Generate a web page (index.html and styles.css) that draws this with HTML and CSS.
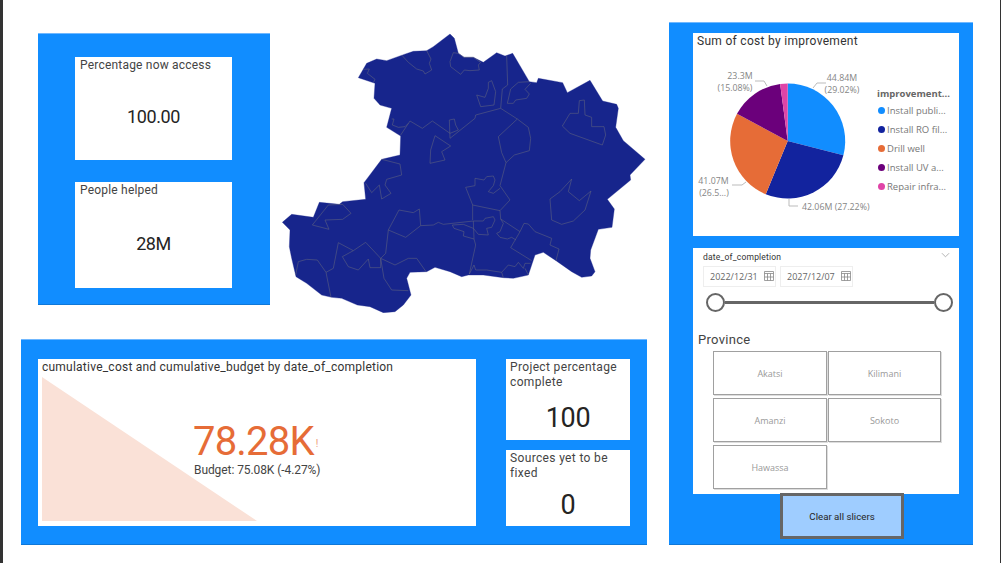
FILE: index.html
```html
<!DOCTYPE html>
<html lang="en">
<head>
<meta charset="utf-8">
<title>Water projects dashboard</title>
<link rel="stylesheet" href="styles.css">
</head>
<body>
<div class="report">
  <div class="left-col">
    <div class="top-row">
      <section class="panel panel-a">
        <div class="card card-a1"><h3 class="card-title">Percentage now access</h3><div class="card-value value-md">100.00</div></div>
        <div class="card card-a2"><h3 class="card-title">People helped</h3><div class="card-value value-md">28M</div></div>
      </section>
      <svg class="map" viewBox="33 39 1095 840" aria-label="Map of provinces">
        <path class="land" d="M540 42L553 55L565 100L582 112L610 112L640 127L680 98L705 108L728 100L778 185L800 188L805 175L878 188L892 218L960 181L998 243L1040 253L1045 265L1037 322L1060 362L1125 418L1080 465L1082 480L1012 538L1033 567L1026 622L985 628L962 690L960 715L975 755L965 768L935 772L905 755L858 722L820 697L795 705L780 750L775 765L730 775L700 773L640 765L595 765L575 770L540 755L495 742L470 755L420 757L410 775L423 825L400 855L375 875L340 878L300 860L262 855L215 835L185 832L155 825L110 790L78 770L65 715L58 680L60 630L37 607L65 583L130 592L148 547L208 553L218 545L287 538L282 488L335 418L390 405L392 348L350 322L365 265L330 255L312 235L315 190L265 173L290 130L320 117L350 122L400 104L430 94L470 92L490 80Z"/>
        <path class="borders" d="M395 105L415 127L440 147L460 153L465 162L485 150L478 130L483 117L470 92M280 148L298 147L292 160L315 178L310 188M550 98L565 100L582 112L610 112L632 127L625 135L628 150L600 152L583 150L572 163L542 140L540 125ZM655 187L665 182L677 215L672 255L632 260L620 225L645 232L655 205ZM710 108L713 195L697 207L692 265L617 285L615 295L540 355L538 300L553 297L557 315L565 330L540 340L487 303L457 325L420 303L392 345M365 297L372 297L367 315L385 322L405 320L415 310M778 185L745 187L722 207L712 250L730 250L737 240L770 235L778 222L765 208L782 190M692 265L742 297L775 322L782 355L778 392L733 405L708 428L695 398L685 350L742 297M708 428L690 497L720 540L690 572L608 555L587 502L615 497L615 475L642 480L650 470L670 468L675 480L670 497L655 515L670 520L690 505M608 555L608 600M690 572L692 597L750 635L722 683L785 722M452 617L490 615L505 607L520 613L610 603L640 603L645 595L670 590L675 600L665 622L650 625L655 645L625 643L610 625L580 613L547 615L552 625L582 635L580 648L612 657M610 603L612 657L617 675L598 762M692 597L700 610L690 635L680 640L690 652L712 657L725 652L738 660M750 635L762 610L775 612L795 635L845 655L840 675L867 687L858 722M335 418L390 432L395 465L350 478L345 495L363 520L335 537L328 495L305 518L287 490M495 347L542 378L515 395L525 420L480 430L482 390ZM905 477L895 515L928 542L963 513L945 570L910 603L875 613L845 600L840 537L870 515ZM928 242L943 240L945 285L965 292L965 320L1002 320L1007 345L997 375L900 340L877 318L900 280L925 280ZM175 555L218 553L243 580L218 598L165 600L177 628L127 615ZM387 570L430 578L448 567L452 617L407 652L355 630ZM355 630L347 700L332 715M205 668L250 692L287 667L332 715L332 743L300 743L295 717L265 750L235 740L217 710L250 692M205 668L190 745L168 757L142 720L110 718L85 725L77 765M168 757L183 832M332 715L375 735L415 715L440 715L468 755M332 715L342 775L365 810L415 812M598 762L612 735L617 750L650 750L695 757L715 735L735 740L745 727L760 745L765 730L782 730M700 773L695 757M765 745L775 765"/>
      </svg>
    </div>
    <section class="panel panel-b">
      <div class="card kpi">
        <h3 class="card-title kpi-title">cumulative_cost and cumulative_budget by date_of_completion</h3>
        <svg class="kpi-area" viewBox="0 0 215 144" preserveAspectRatio="none" aria-hidden="true"><polygon points="0,0 215,144 0,144"/></svg>
        <div class="kpi-text">
          <div class="kpi-value">78.28K<span class="kpi-flag">!</span></div>
          <div class="kpi-budget">Budget: 75.08K (-4.27%)</div>
        </div>
      </div>
      <div class="side-cards">
        <div class="card card-b1"><h3 class="card-title wrap">Project percentage complete</h3><div class="card-value value-lg">100</div></div>
        <div class="card card-b2"><h3 class="card-title wrap">Sources yet to be fixed</h3><div class="card-value value-lg">0</div></div>
      </div>
    </section>
  </div>
  <section class="panel panel-c">
    <div class="card pie-card">
      <h3 class="card-title pie-title">Sum of cost by improvement</h3>
      <div class="pie-body">
        <svg class="pie" viewBox="693 53 184 180" aria-label="Pie chart">
          <g transform="translate(787.7 141)">
            <path fill="#118DFF" d="M0 0V-57.5A57.5 57.5 0 0 1 55.68 14.36Z"/>
            <path fill="#12239E" d="M0 0L55.68 14.36A57.5 57.5 0 0 1 -21.96 53.14Z"/>
            <path fill="#E66C37" d="M0 0L-21.96 53.14A57.5 57.5 0 0 1 -50.7 -27.13Z"/>
            <path fill="#6B007B" d="M0 0L-50.7 -27.13A57.5 57.5 0 0 1 -7.57 -57Z"/>
            <path fill="#E044A7" d="M0 0L-7.57 -57A57.5 57.5 0 0 1 0 -57.5Z"/>
          </g>
          <path class="leader" d="M813 88L817 83H826M755 81H764L767 86M732 185H742L746 182M789 199V206H798"/>
          <text class="pie-label" x="842" y="81" text-anchor="middle">44.84M</text>
          <text class="pie-label" x="842" y="93" text-anchor="middle">(29.02%)</text>
          <text class="pie-label" x="740" y="79" text-anchor="middle">23.3M</text>
          <text class="pie-label" x="735" y="91" text-anchor="middle">(15.08%)</text>
          <text class="pie-label" x="713.500" y="184" text-anchor="middle">41.07M</text>
          <text class="pie-label" x="714" y="196" text-anchor="middle">(26.5...)</text>
          <text class="pie-label" x="802" y="210">42.06M (27.22%)</text>
        </svg>
        <div class="legend">
          <div class="legend-title">improvement...</div>
          <div class="legend-item"><i class="dot dot-1"></i>Install publi...</div>
          <div class="legend-item"><i class="dot dot-2"></i>Install RO fil...</div>
          <div class="legend-item"><i class="dot dot-3"></i>Drill well</div>
          <div class="legend-item"><i class="dot dot-4"></i>Install UV a...</div>
          <div class="legend-item"><i class="dot dot-5"></i>Repair infra...</div>
        </div>
      </div>
    </div>
    <div class="card slicer-card">
      <div class="slicer-head">
        <span class="slicer-name">date_of_completion</span>
        <svg class="chevron" viewBox="0 0 10 6" aria-hidden="true"><path d="M1 1L5 5L9 1"/></svg>
      </div>
      <div class="dates">
        <div class="date-box">2022/12/31<svg class="cal" viewBox="0 0 10 10" aria-hidden="true"><path d="M.5 .5H9.500V9.500H.5ZM.5 2.500H9.500M3.500 2.500V9.500M6.500 2.500V9.500M.5 6H9.500"/></svg></div>
        <div class="date-box">2027/12/07<svg class="cal" viewBox="0 0 10 10" aria-hidden="true"><path d="M.5 .5H9.500V9.500H.5ZM.5 2.500H9.500M3.500 2.500V9.500M6.500 2.500V9.500M.5 6H9.500"/></svg></div>
      </div>
      <div class="slider"><span class="knob"></span><span class="track"></span><span class="knob"></span></div>
      <h3 class="province">Province</h3>
      <div class="province-grid">
        <div class="province-btn">Akatsi</div>
        <div class="province-btn">Kilimani</div>
        <div class="province-btn">Amanzi</div>
        <div class="province-btn">Sokoto</div>
        <div class="province-btn">Hawassa</div>
      </div>
    </div>
    <button class="clear-btn" type="button">Clear all slicers</button>
  </section>
</div>
</body>
</html>
```
FILE: styles.css
```css
* { box-sizing: border-box; }
html, body { margin: 0; padding: 0; background: #fff; }
body { width: 1001px; height: 563px; overflow: hidden; font-family: Roboto, "Liberation Sans", sans-serif; }
h3 { margin: 0; font-weight: 400; }

.report { display: flex; width: 1001px; height: 563px; border-left: 3px solid #333; border-right: 1px solid #333; background: #fff; }
.left-col { width: 666px; flex: none; padding-top: 33px; }
.top-row { display: flex; align-items: flex-start; height: 280px; padding-left: 35px; }

.panel { background: #118DFF; border-top: 1px solid #70b8ff; border-bottom: 1px solid #0f78d8; }
.panel-a { width: 232px; height: 272px; padding: 23px 38px 0 37px; display: flex; flex-direction: column; gap: 22px; }
.map { width: 365px; height: 280px; margin-left: 11px; flex: none; }
.land { fill: #17258C; stroke: #17258C; stroke-width: 1; }
.borders { fill: none; stroke: #5f6480; stroke-width: 1.700; stroke-linejoin: round; }

.panel-b { width: 626px; height: 206px; margin: 26px 0 0 18px; padding: 19px 16px 0 17px; display: flex; gap: 30px; }

.card { background: #fff; display: flex; flex-direction: column; }
.card-a1 { height: 103px; }
.card-a2 { height: 106px; }
.card-title { font-size: 12px; line-height: 15px; letter-spacing: .2px; color: #444; padding: 1px 5px 0; white-space: nowrap; }
.card-title.wrap { white-space: normal; padding: 1px 4px 0; letter-spacing: .35px; }
.card-value { flex: 1; display: flex; align-items: center; justify-content: center; color: #252423; }
.value-md { font-size: 18px; letter-spacing: -.4px; }
.value-lg { font-size: 27px; letter-spacing: -.3px; }
.card-b1 .card-value { padding-top: 5px; }
.card-b2 .card-value { padding-top: 2px; }

.kpi { width: 438px; height: 167px; position: relative; padding: 0 0 5px 4px; }
.kpi-title { padding: 1px 0 0 0; height: 18px; color: #333; letter-spacing: .23px; }
.kpi-area { flex: none; width: 215px; height: 144px; display: block; }
.kpi-area polygon { fill: #FAE1D7; }
.kpi-text { position: absolute; left: 155px; top: 63px; }
.kpi-value { font-size: 40px; line-height: 40px; letter-spacing: -.8px; color: #E66C37; white-space: nowrap; }
.kpi-flag { font-size: 10px; vertical-align: 8px; color: #EE9A78; margin-left: 2px; letter-spacing: 0; }
.kpi-budget { font-size: 12px; line-height: 15px; letter-spacing: -.08px; color: #444; white-space: nowrap; margin: -1px 0 0 1px; }

.side-cards { width: 124px; display: flex; flex-direction: column; gap: 10px; }
.card-b1 { height: 81px; }
.card-b2 { height: 76px; }

.panel-c { width: 304px; height: 523px; margin: 22px 0 0 0; padding: 10px 14px 0 24px; display: flex; flex-direction: column; }
.pie-card { height: 203px; position: relative; }
.pie-title { padding: 1px 0 0 4px; height: 20px; color: #333; letter-spacing: .3px; }
.pie-body { display: flex; }
.pie { width: 184px; height: 180px; flex: none; }
.pie-label { font-family: "Open Sans", sans-serif; font-size: 8.800px; fill: #858585; }
.leader { fill: none; stroke: #bbb; stroke-width: 1; }
.legend { padding-top: 33px; font-family: "Open Sans", sans-serif; font-size: 9.500px; color: #777; white-space: nowrap; }
.legend-title { font-weight: 700; font-size: 9.500px; height: 15px; line-height: 15px; color: #666; }
.legend-item { display: flex; align-items: center; height: 19px; }
.dot { width: 7px; height: 7px; border-radius: 50%; margin: 0 2px 0 1px; flex: none; }
.dot-1 { background: #118DFF; }
.dot-2 { background: #12239E; }
.dot-3 { background: #E66C37; }
.dot-4 { background: #6B007B; }
.dot-5 { background: #E044A7; }

.slicer-card { height: 246px; margin-top: 12px; }
.slicer-head { display: flex; justify-content: space-between; align-items: center; height: 18px; padding: 0 9px 0 10px; }
.slicer-name { font-size: 8.500px; letter-spacing: .2px; color: #333; }
.chevron { width: 9px; height: 6px; margin-top: -4px; }
.chevron path { fill: none; stroke: #aaa; stroke-width: 1; }
.dates { display: flex; gap: 4px; padding-left: 10px; }
.date-box { width: 73px; height: 21px; border: 1px solid #eee; display: flex; align-items: center; gap: 6px; padding-left: 6px; font-family: "Open Sans", sans-serif; font-size: 9px; color: #666; white-space: nowrap; }
.cal { width: 10px; height: 10px; flex: none; margin-top: -2px; }
.cal path { fill: none; stroke: #888; stroke-width: .8; }
.slider { display: flex; align-items: center; height: 20px; margin: 5px 6px 0 13px; }
.knob { width: 19px; height: 19px; border-radius: 50%; border: 2px solid #666; background: #fff; flex: none; }
.track { flex: 1; height: 3px; background: #666; }
.province { font-size: 13px; line-height: 16px; letter-spacing: .3px; color: #444; padding-left: 5px; margin-top: 20px; }
.province-grid { display: grid; grid-template-columns: 114px 113px; grid-auto-rows: 44px; gap: 3px 1px; margin: 3px 0 0 20px; }
.province-btn { border: 1px solid #a0a0a0; box-shadow: 1px 1px 0 #ddd; display: flex; align-items: center; justify-content: center; font-family: "Open Sans", sans-serif; font-size: 9px; color: #999; }

.clear-btn { width: 124px; height: 46px; margin: -1px 0 0 87px; background: #9FCDFF; border: 3px solid #666; font-family: Roboto, sans-serif; font-size: 9.700px; color: #252423; padding: 0; flex: none; }
```
